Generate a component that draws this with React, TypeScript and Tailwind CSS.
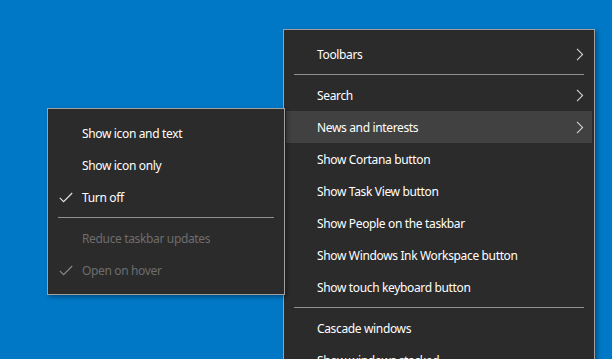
import React from "react";

type Item = { label: string; arrow?: boolean; hover?: boolean } | "sep";

const mainItems: Item[] = [
    { label: "Toolbars", arrow: true },
    "sep",
    { label: "Search", arrow: true },
    { label: "News and interests", arrow: true, hover: true },
    { label: "Show Cortana button" },
    { label: "Show Task View button" },
    { label: "Show People on the taskbar" },
    { label: "Show Windows Ink Workspace button" },
    { label: "Show touch keyboard button" },
    "sep",
    { label: "Cascade windows" },
    { label: "Show windows stacked" },
];

const subItems: ({ label: string; checked?: boolean; disabled?: boolean } | "sep")[] = [
    { label: "Show icon and text" },
    { label: "Show icon only" },
    { label: "Turn off", checked: true },
    "sep",
    { label: "Reduce taskbar updates", disabled: true },
    { label: "Open on hover", checked: true, disabled: true },
];

const Chevron = () => (
    <svg width="8" height="13" viewBox="0 0 8 13" className="text-[#d0d0d0]">
        <path d="M1 0.8 L6.6 6.5 L1 12.2" fill="none" stroke="currentColor" strokeWidth="1.1" />
    </svg>
);

const Check = ({ dim }: { dim?: boolean }) => (
    <svg width="14" height="11" viewBox="0 0 14 11" className={dim ? "text-[#8a8a8a]" : "text-[#e6e6e6]"}>
        <path d="M0.8 5.8 L4.6 9.6 L13.2 1" fill="none" stroke="currentColor" strokeWidth="1.1" />
    </svg>
);

export default function App() {
    return (
        <div className="relative w-[612px] h-[359px] overflow-hidden bg-[#0078c6]" style={{ fontFamily: '"Noto Sans", "Open Sans", sans-serif' }}>
            {/* main taskbar menu */}
            <div className="absolute left-[283px] top-[29px] w-[312px] h-[360px] bg-[#2b2b2b] border border-[#a0a0a0] px-[2px] py-2 shadow-[2px_2px_4px_rgba(0,0,0,0.35)]">
                {mainItems.map((it, i) =>
                    it === "sep" ? (
                        <div key={i} className="h-[9px] flex items-center px-2">
                            <div className="w-full h-px bg-[#8f8f8f]" />
                        </div>
                    ) : (
                        <div key={i} className={`h-8 flex items-center justify-between pl-[31px] pr-[8px] text-[12px] tracking-[-0.35px] text-white ${it.hover ? "bg-[#414141]" : ""}`}>
                            <span className="pt-px">{it.label}</span>
                            {it.arrow && <Chevron />}
                        </div>
                    )
                )}
            </div>

            {/* news and interests submenu */}
            <div className="absolute left-[47px] top-[108px] w-[238px] bg-[#2b2b2b] border border-[#a0a0a0] px-[2px] py-2 shadow-[2px_2px_4px_rgba(0,0,0,0.35)]">
                {subItems.map((it, i) =>
                    it === "sep" ? (
                        <div key={i} className="h-[9px] flex items-center pl-[8px] pr-[8px]">
                            <div className="w-full h-px bg-[#8f8f8f]" />
                        </div>
                    ) : (
                        <div key={i} className={`h-8 flex items-center text-[12px] tracking-[-0.35px] ${it.disabled ? "text-[#6d6d6d]" : "text-white"}`}>
                            <span className="w-[32px] flex justify-end pr-[9px]">{it.checked && <Check dim={it.disabled} />}</span>
                            <span className="pt-px">{it.label}</span>
                        </div>
                    )
                )}
            </div>
        </div>
    );
}
